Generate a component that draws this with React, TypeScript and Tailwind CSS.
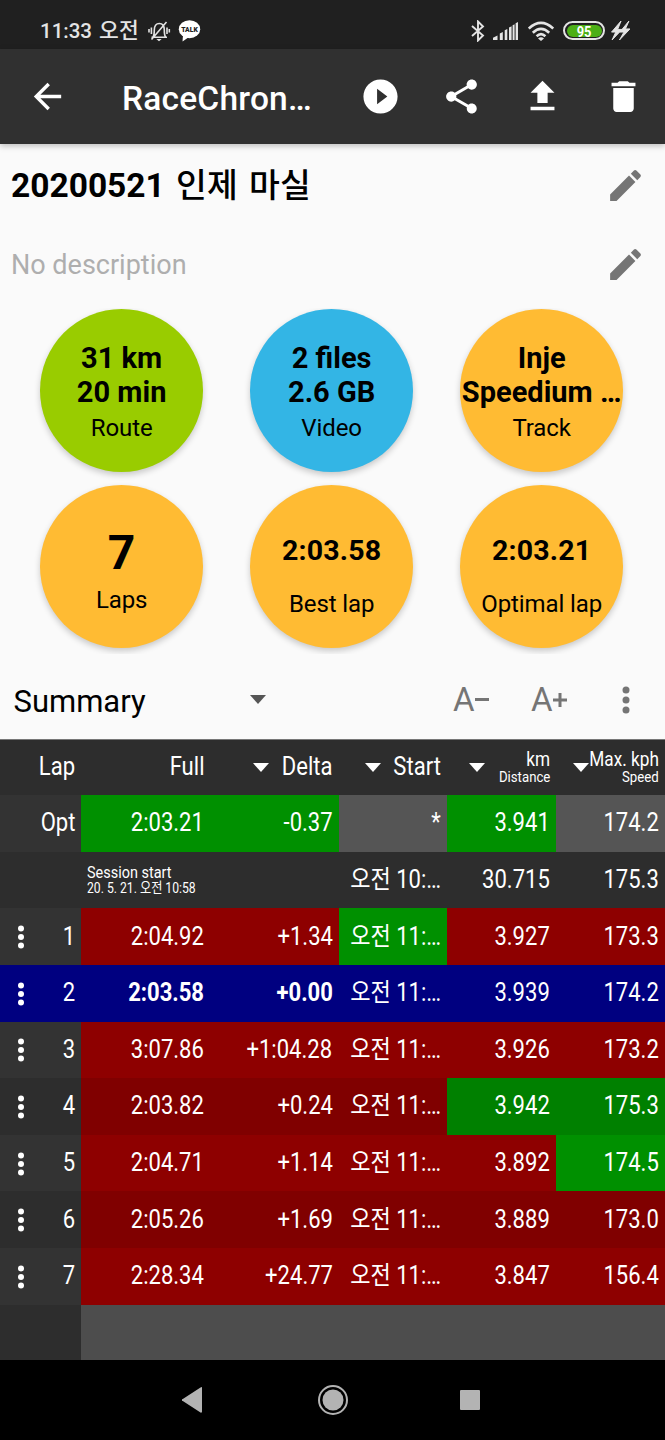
import React from "react";

const FONT = "font-[Roboto,'Noto_Sans_CJK_KR',sans-serif]";

function Cond({ children, className = "" }: { children: React.ReactNode; className?: string }) {
  return <span className={`inline-block origin-right scale-x-[0.882] whitespace-nowrap ${className}`}>{children}</span>;
}

function Dots({ className }: { className: string }) {
  return (
    <svg viewBox="0 0 8 28" className={className} fill="currentColor">
      <circle cx="4" cy="4" r="3.5" />
      <circle cx="4" cy="14" r="3.5" />
      <circle cx="4" cy="24" r="3.5" />
    </svg>
  );
}

function Caret({ className = "" }: { className?: string }) {
  return (
    <svg viewBox="0 0 16 9" className={`h-[9px] w-4 shrink-0 ${className}`} fill="currentColor">
      <path d="M0 0h16L8 9z" />
    </svg>
  );
}

function StatusBar() {
  return (
    <div className="flex h-[49px] items-center bg-[#202020] pt-3 pl-[40px] text-[#e4e4e4]">
      <div className="w-[107px] text-[20.5px] leading-6 font-medium whitespace-nowrap [word-spacing:2px]">
        11:33 <span className="text-[21.5px]">오전</span>
      </div>
      <svg className="h-6 w-6" viewBox="0 0 24 24" fill="none" stroke="currentColor" strokeWidth="1.6">
        <path d="M4.500 18.300h15.500M6 18c1.300-1.800 1.300-4 1.300-7c0-4 1.800-6.500 5-6.500s5 2.500 5 6.500c0 3 0 5.200 1.300 7M4.400 8.500v6.500M2 10v3.500M20 8.500v6.500M22.300 10v3.500M19.500 3L4.500 20.500" />
        <path d="M9.300 20h5.400l-2.700 2.200z" fill="currentColor" stroke="none" />
      </svg>
      <svg className="ml-[7px] h-6 w-6" viewBox="0 0 24 24">
        <ellipse cx="11.500" cy="10.200" rx="10.700" ry="9" fill="#fff" />
        <path d="M5 16l-.5 6.500 6.500-4.500z" fill="#fff" />
        <text x="11.500" y="12.600" textAnchor="middle" fontSize="6.800" fontWeight="900" fontFamily="Roboto" fill="#202020">TALK</text>
      </svg>
      <div className="ml-[269px] flex items-center">
        <svg className="h-[22px] w-[14px]" viewBox="0 0 14 22" fill="none" stroke="currentColor" strokeWidth="1.9">
          <path d="M1 6l11 9.500-5 5V1.500l5 5L1 16" />
        </svg>
        <svg className="ml-[8px] h-[18px] w-[26px]" viewBox="0 0 26 18" fill="currentColor">
          <path d="M0 18v-2.200l4.500-2.300V18zM6.800 18v-6.500l3-1.500v8zM11.700 18V8.200l2.600-1.300V18zM16 18V5.500l2.600-1.300V18zM19.600 18V3.200l2-1V18zM22.600 18V1.300L25 0v18z" />
        </svg>
        <svg className="ml-[9px] h-[20px] w-[26px]" viewBox="0 0 26 20" fill="none" stroke="currentColor" strokeWidth="2.600">
          <path d="M.800 7.500Q13-3.800 25.200 7.500M4.800 11.700Q13 4 21.200 11.700M8.600 15.200Q13 11 17.400 15.200" />
          <path d="M10 17.500Q13 15.200 16 17.500L13 20z" fill="currentColor" stroke="none" />
        </svg>
        <div className="ml-[9px] flex h-[19px] w-[42px] items-center justify-center rounded-full border-2 border-current p-[1.500px]">
          <div className="flex h-full w-full items-center justify-center rounded-full bg-[#4caf16] text-white">
            <span className="scale-x-[0.92] pt-[2px] text-[14px] leading-none font-bold">95</span>
          </div>
        </div>
        <svg className="ml-[6px] h-[19px] w-[19px]" viewBox="0 0 18 18" fill="currentColor">
          <path d="M9.500 0L.500 10.500h4L1 18 10.500 8H6.300zM17 0L8.300 10.500h4L8 18 18 7.500h-4.300z" stroke="currentColor" strokeWidth=".9" />
        </svg>
      </div>
    </div>
  );
}

const M = "h-[41px] w-[41px] shrink-0";

function Toolbar() {
  return (
    <div className="relative z-10 flex h-[95px] items-center bg-[#303030] pl-[27px] text-white shadow-[0_2px_6px_rgba(0,0,0,0.25)]">
      <svg className={M} viewBox="0 0 24 24" fill="currentColor">
        <path d="M20 11H7.830l5.590-5.590L12 4l-8 8 8 8 1.410-1.410L7.830 13H20v-2z" />
      </svg>
      <div className="ml-[54px] w-[238px] pt-[4px] text-[33.500px] leading-none font-medium tracking-[0.2px]">RaceChron…</div>
      <svg className={M} viewBox="0 0 24 24" fill="currentColor">
        <path d="M12 2C6.480 2 2 6.480 2 12s4.480 10 10 10 10-4.480 10-10S17.520 2 12 2zm-2 14.500v-9l6 4.500-6 4.500z" />
      </svg>
      <svg className={`ml-[40px] ${M}`} viewBox="0 0 24 24" fill="currentColor">
        <path d="M18 16.080c-.76 0-1.440.3-1.960.77L8.910 12.700c.05-.23.09-.46.09-.7s-.04-.47-.09-.7l7.050-4.110c.54.5 1.250.81 2.040.81 1.660 0 3-1.340 3-3s-1.340-3-3-3-3 1.340-3 3c0 .24.04.47.09.7L8.040 9.810C7.500 9.310 6.790 9 6 9c-1.660 0-3 1.340-3 3s1.340 3 3 3c.79 0 1.500-.31 2.040-.81l7.120 4.160c-.05.21-.08.43-.08.65 0 1.610 1.310 2.920 2.920 2.920s2.920-1.310 2.920-2.920-1.310-2.920-2.920-2.920z" />
      </svg>
      <svg className={`ml-[40px] ${M}`} viewBox="0 0 24 24" fill="currentColor">
        <path d="M9 15.800h6v-6h4l-7-7-7 7h4zM5 18v2h14v-2z" />
      </svg>
      <svg className={`ml-[40px] ${M}`} viewBox="0 0 24 24" fill="currentColor">
        <path d="M6 19c0 1.100.9 2 2 2h8c1.100 0 2-.9 2-2V7H6v12zM19 4h-3.500l-1-1h-5l-1 1H5v2h14V4z" />
      </svg>
    </div>
  );
}

function Pencil() {
  return (
    <svg className="h-[41px] w-[41px] text-[#757575]" viewBox="0 0 24 24" fill="currentColor">
      <path d="M3 17.250V21h3.750L17.810 9.940l-3.750-3.750L3 17.250zM20.710 7.040c.39-.39.39-1.020 0-1.410l-2.340-2.340c-.39-.39-1.020-.39-1.410 0l-1.830 1.830 3.750 3.750 1.830-1.830z" />
    </svg>
  );
}

const circles = [
  { bg: "bg-[#99cc00]", lines: ["31 km", "20 min"], label: "Route", kind: "two" },
  { bg: "bg-[#33b5e5]", lines: ["2 files", "2.6 GB"], label: "Video", kind: "two" },
  { bg: "bg-[#ffbb33]", lines: ["Inje", "Speedium …"], label: "Track", kind: "two" },
  { bg: "bg-[#ffbb33]", lines: ["7"], label: "Laps", kind: "big" },
  { bg: "bg-[#ffbb33]", lines: ["2:03.58"], label: "Best lap", kind: "one" },
  { bg: "bg-[#ffbb33]", lines: ["2:03.21"], label: "Optimal lap", kind: "one" },
];

const pads: Record<string, string> = { two: "pt-[33px]", big: "pt-[40px]", one: "pt-[49px]" };
const sizes: Record<string, string> = {
  two: "text-[29px] leading-[33.500px]",
  big: "text-[48px] leading-[56px]",
  one: "text-[28.500px] leading-[34px] mb-[17px] tracking-[0.15px]",
};

function Circles() {
  return (
    <div className="grid h-[346px] grid-cols-[162.500px_162.500px_162.500px] content-start gap-x-[47.500px] gap-y-[13.500px] overflow-hidden pt-[1px] pl-[40.400px]">
      {circles.map((c) => (
        <div key={c.label} className={`h-[162.500px] w-[162.500px] rounded-full text-center text-black shadow-[0_3px_6px_rgba(0,0,0,0.2)] ${c.bg} ${pads[c.kind]}`}>
          {c.lines.map((l) => (
            <div key={l} className={`font-bold whitespace-nowrap ${sizes[c.kind]}`}>{l}</div>
          ))}
          <div className="pt-[4px] text-[24px] leading-[30px] tracking-[-0.1px]">{c.label}</div>
        </div>
      ))}
    </div>
  );
}

const K: Record<string, string> = {
  g: "bg-[#009000]",
  G: "bg-[#008000]",
  r: "bg-[#8e0000]",
  R: "bg-[#800000]",
  x: "bg-[#555555]",
  d: "bg-[#2d2d2d]",
  b: "bg-[#000080]",
};

const laps = [
  { n: "Opt", v: ["2:03.21", "-0.37", "*", "3.941", "174.2"], k: "ggxgx" },
  { n: "", v: ["", "", "오전 10:…", "30.715", "175.3"], k: "ddddd" },
  { n: "1", v: ["2:04.92", "+1.34", "오전 11:…", "3.927", "173.3"], k: "rrgrr" },
  { n: "2", v: ["2:03.58", "+0.00", "오전 11:…", "3.939", "174.2"], k: "bbbbb" },
  { n: "3", v: ["3:07.86", "+1:04.28", "오전 11:…", "3.926", "173.2"], k: "rrrrr" },
  { n: "4", v: ["2:03.82", "+0.24", "오전 11:…", "3.942", "175.3"], k: "RRRGG" },
  { n: "5", v: ["2:04.71", "+1.14", "오전 11:…", "3.892", "174.5"], k: "rrrrg" },
  { n: "6", v: ["2:05.26", "+1.69", "오전 11:…", "3.889", "173.0"], k: "RRRRR" },
  { n: "7", v: ["2:28.34", "+24.77", "오전 11:…", "3.847", "156.4"], k: "rrrrr" },
];

const GRID = "grid grid-cols-[81px_129px_128.500px_108.500px_109px_109px]";
const CELL = "flex items-center justify-end pr-[6px] pb-[1px]";

function Head({ children }: { children: React.ReactNode }) {
  return <div className={CELL}>{children}</div>;
}

function LapTable() {
  return (
    <div className="bg-[#4d4d4d] text-[25px] leading-none text-white">
      <div className={`${GRID} h-[56.500px] border-t border-[#777] bg-[#2d2d2d]`}>
        <Head><Cond>Lap</Cond></Head>
        <Head><Cond>Full</Cond></Head>
        <div className={`${CELL} relative`}><Caret className="absolute top-[23px] left-[43px]" /><Cond>Delta</Cond></div>
        <div className={`${CELL} relative`}><Caret className="absolute top-[23px] left-[26px]" /><Cond>Start</Cond></div>
        {[["km", "Distance"], ["Max. kph", "Speed"]].map(([a, b], i) => (
          <div key={a} className={`${CELL} relative`}>
            <Caret className={`absolute top-[23px] ${i ? "left-[17px]" : "left-[22px]"}`} />
            <div className="flex flex-col items-end pt-px">
              <Cond className="text-[19.500px] leading-[19px]">{a}</Cond>
              <Cond className="text-[15px] leading-[16px]">{b}</Cond>
            </div>
          </div>
        ))}
      </div>
      {laps.map((row, i) => {
        const best = row.n === "2";
        const side = best ? "bg-[#000080]" : i % 2 ? "bg-[#2d2d2d]" : "bg-[#333333]";
        return (
          <div key={i} className={`${GRID} h-[56.640px]`}>
            <div className={`${CELL} ${side}`}>
              {i > 1 && <Dots className="mt-[2px] mr-auto ml-[17px] h-[24px] w-[8px]" />}
              <Cond>{row.n}</Cond>
            </div>
            {row.v.map((v, j) => {
              if (i === 1 && j === 0)
                return (
                  <div key={j} className="col-span-2 flex flex-col items-start justify-center bg-[#2d2d2d] pl-[6px]">
                    <span className="inline-block origin-left scale-x-[0.876] text-[16.500px] leading-[17px] whitespace-nowrap">Session start</span>
                    <span className="inline-block origin-left scale-x-[0.84] text-[14.500px] leading-[15px] whitespace-nowrap">20. 5. 21. 오전 10:58</span>
                  </div>
                );
              if (i === 1 && j === 1) return null;
              return (
                <div key={j} className={`${CELL} ${K[row.k[j]]} ${best && j < 2 ? "font-bold" : ""}`}>
                  <Cond>{v}</Cond>
                </div>
              );
            })}
          </div>
        );
      })}
      <div className="h-[55.240px] w-[81px] bg-[#2d2d2d]" />
    </div>
  );
}

export default function App() {
  return (
    <div className={`h-[1440px] w-[665px] overflow-hidden bg-[#fafafa] ${FONT}`}>
      <StatusBar />
      <Toolbar />
      <div className="flex h-[82px] items-center justify-between pr-[19px] pl-[11px]">
        <h1 className="pt-[2px] text-[33.500px] leading-none font-bold whitespace-nowrap [word-spacing:3px]">
          20200521 <span className="font-medium">인제 마실</span>
        </h1>
        <Pencil />
      </div>
      <div className="flex h-[82px] items-center justify-between pr-[19px] pb-[6px] pl-[11px]">
        <p className="pt-[3px] text-[27px] leading-none text-[#aeaeae]">No description</p>
        <Pencil />
      </div>
      <Circles />
      <div className="flex h-[84.500px] items-center pt-[7px] pl-[13.500px]">
        <div className="w-[236.500px] pt-[3px] text-[31px] leading-none">Summary</div>
        <Caret className="text-[#555]" />
        <div className="ml-[187px] flex items-center text-[#757575]">
          <div className="flex w-[78px] items-center text-[33px] leading-none">
            A<span className="h-[3px] w-[14px] bg-current" />
          </div>
          <div className="flex w-[91px] items-center text-[33px] leading-none">
            A
            <svg className="h-[14px] w-[14px]" viewBox="0 0 14 14" stroke="currentColor" strokeWidth="3">
              <path d="M0 7h14M7 0v14" />
            </svg>
          </div>
          <Dots className="h-[28px] w-[8px]" />
        </div>
      </div>
      <LapTable />
      <div className="flex h-20 items-center bg-black pl-[182px] text-[#b3b3b3]">
        <svg className="h-[26px] w-[20px]" viewBox="0 0 20 26" fill="currentColor">
          <path d="M20 0v24.500a1 1 0 0 1-1.500 1L.800 14a1 1 0 0 1 0-2L18.500.500z" />
        </svg>
        <svg className="ml-[115px] h-[32px] w-[32px]" viewBox="0 0 32 32">
          <circle cx="16" cy="16" r="14" fill="none" stroke="currentColor" strokeWidth="2" />
          <circle cx="16" cy="16" r="10.500" fill="currentColor" />
        </svg>
        <div className="ml-[111px] h-[20px] w-[20px] rounded-[1px] bg-current" />
      </div>
    </div>
  );
}
